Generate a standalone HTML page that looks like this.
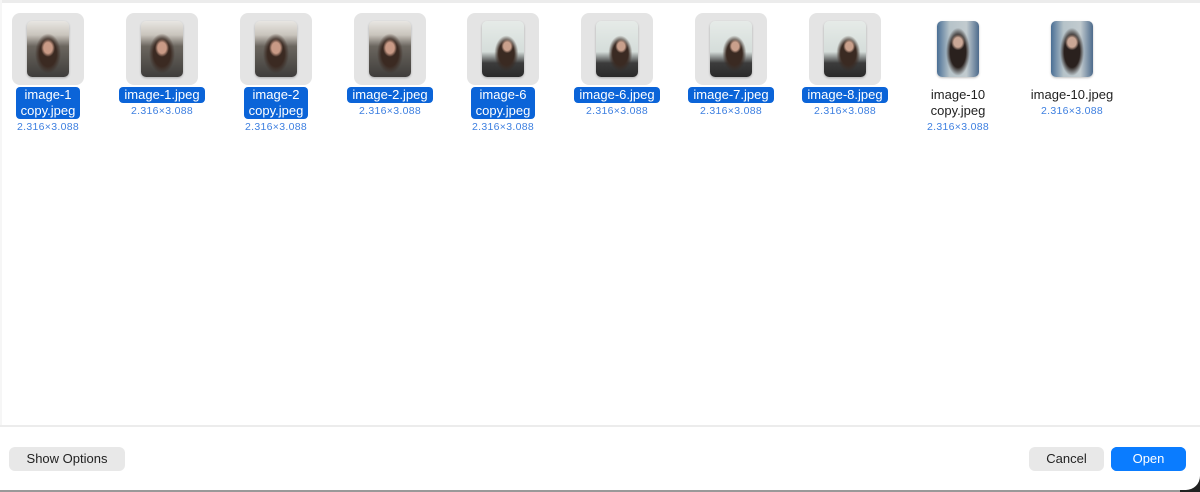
<!DOCTYPE html>
<html><head><meta charset="utf-8"><style>
html,body{margin:0;padding:0}
body{width:1200px;height:492px;position:relative;background:#fff;overflow:hidden;font-family:"Liberation Sans",Helvetica,Arial,sans-serif}
.top{position:absolute;left:0;top:0;width:1200px;height:3px;background:#ececec}
.left{position:absolute;left:0;top:0;width:2px;height:425px;background:#f6f6f6}
.item{position:absolute;top:0;width:114px;margin-left:-57px;text-align:center}
.box{position:absolute;left:21px;top:13px;width:72px;height:72px;border-radius:8px;background:#e4e4e4}
.ph{position:absolute;left:36px;top:21px;width:42px;height:56px;border-radius:5px;overflow:hidden;box-shadow:0 1px 2px rgba(0,0,0,.25)}
.a{background:radial-gradient(ellipse 7px 9px at 50% 48%,#c99a86 60%,transparent 100%),radial-gradient(ellipse 13px 20px at 50% 58%,#3b2a22 65%,transparent 100%),linear-gradient(#e8e6e2 0,#c9c4bc 25%,#6b665f 45%,#3f3d3b 100%)}
.b{background:radial-gradient(ellipse 6px 7px at 60% 45%,#c9a08c 60%,transparent 100%),radial-gradient(ellipse 12px 18px at 58% 58%,#3a2a22 65%,transparent 100%),linear-gradient(#e6ebe8 0,#d5ddda 55%,#3c3c3c 75%,#2a2a2a 100%)}
.c{background:radial-gradient(ellipse 7px 8px at 50% 38%,#caa796 60%,transparent 100%),radial-gradient(ellipse 12px 24px at 50% 55%,#2a211e 65%,transparent 100%),linear-gradient(90deg,#4a6f95,#b6c3c9 30%,#c2cbcf 70%,#4d6b8c)}
.lbl{position:absolute;top:87px;left:0;width:114px;font-size:13px;line-height:16px;color:#222}
.lbl span{display:inline-block;padding:0 5px;border-radius:4px}
.sel span{background:#0b64d8;color:#fff}
.dim{font-size:10.5px;color:#3d7fe0;letter-spacing:.3px}
.foot{position:absolute;left:0;top:425px;width:1200px;height:2px;background:#ececec}
.btn{position:absolute;top:447px;height:24px;border-radius:6px;background:#e8e8e8;font-size:13px;line-height:24px;text-align:center;color:#222}
</style></head><body>
<div class="top"></div><div class="left"></div>

<div class="item" style="left:48px"><div class="box"></div><div class="ph a"></div><div class="lbl sel"><span>image-1<br>copy.jpeg</span><div class="dim">2.316×3.088</div></div></div>
<div class="item" style="left:162px"><div class="box"></div><div class="ph a"></div><div class="lbl sel"><span>image-1.jpeg</span><div class="dim">2.316×3.088</div></div></div>
<div class="item" style="left:276px"><div class="box"></div><div class="ph a"></div><div class="lbl sel"><span>image-2<br>copy.jpeg</span><div class="dim">2.316×3.088</div></div></div>
<div class="item" style="left:390px"><div class="box"></div><div class="ph a"></div><div class="lbl sel"><span>image-2.jpeg</span><div class="dim">2.316×3.088</div></div></div>
<div class="item" style="left:503px"><div class="box"></div><div class="ph b"></div><div class="lbl sel"><span>image-6<br>copy.jpeg</span><div class="dim">2.316×3.088</div></div></div>
<div class="item" style="left:617px"><div class="box"></div><div class="ph b"></div><div class="lbl sel"><span>image-6.jpeg</span><div class="dim">2.316×3.088</div></div></div>
<div class="item" style="left:731px"><div class="box"></div><div class="ph b"></div><div class="lbl sel"><span>image-7.jpeg</span><div class="dim">2.316×3.088</div></div></div>
<div class="item" style="left:845px"><div class="box"></div><div class="ph b"></div><div class="lbl sel"><span>image-8.jpeg</span><div class="dim">2.316×3.088</div></div></div>
<div class="item" style="left:958px"><div class="ph c"></div><div class="lbl"><span>image-10<br>copy.jpeg</span><div class="dim">2.316×3.088</div></div></div>
<div class="item" style="left:1072px"><div class="ph c"></div><div class="lbl"><span>image-10.jpeg</span><div class="dim">2.316×3.088</div></div></div>

<div class="foot"></div>
<div class="btn" style="left:9px;width:116px">Show Options</div>
<div class="btn" style="left:1029px;width:75px">Cancel</div>
<div class="btn" style="left:1111px;width:75px;background:#0a7cff;color:#fff">Open</div>
<div style="position:absolute;left:0;top:490px;width:1190px;height:2px;background:#999"></div>
<div style="position:absolute;left:1180px;top:472px;width:20px;height:20px;background:#222"></div>
<div style="position:absolute;left:1170px;top:462px;width:30px;height:28px;background:#fff;border-bottom-right-radius:14px"></div>
<div class="btn" style="left:1111px;width:75px;background:#0a7cff;color:#fff">Open</div>
</body></html>
